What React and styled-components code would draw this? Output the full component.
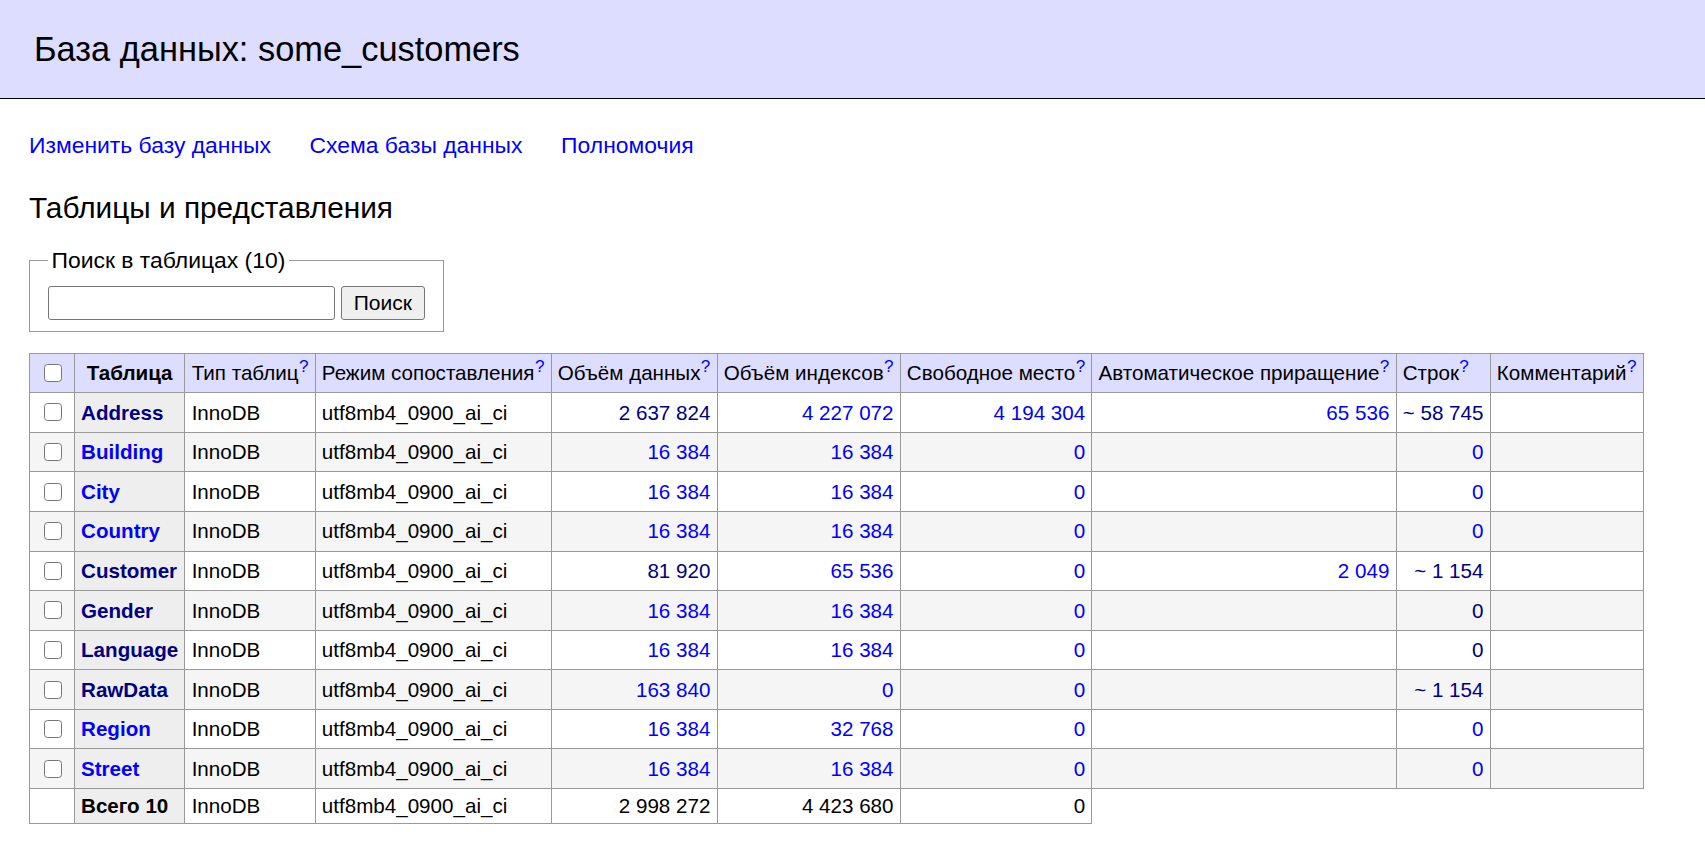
import React from 'react';
import styled, { createGlobalStyle } from 'styled-components';

const GlobalStyle = createGlobalStyle`
    body {
        margin: 0;
        background: #fff;
        color: #000;
        font: 22.9px/1.25 "Liberation Sans", Arial, sans-serif;
    }
`

const Header = styled.h2`
    margin: 0 0 31.8px;
    padding: 27.5px 34px;
    font-size: 34.4px;
    line-height: 1.25;
    font-weight: normal;
    background: #ddf;
    border-bottom: 1px solid #000;
`

const Content = styled.div`
    padding: 0 20px 30px 29px;
`

const Links = styled.p`
    display: flex;
    gap: 38.6px;
    margin: 0;
`

const Link = styled.a`
    color: ${props => props.$visited ? 'navy' : '#00f'};
    text-decoration: none;
    white-space: nowrap;
`

const Title = styled.h3`
    margin: 29.8px 0 0;
    font-size: 29.8px;
    line-height: 1.25;
    font-weight: normal;
`

const Fieldset = styled.fieldset`
    display: inline-flex;
    gap: 6.3px;
    margin: 19.3px 0 0;
    padding: 11.45px 18.3px;
    border: 1px solid #999;
    min-inline-size: 0;
`

const Legend = styled.legend`
    padding: 0 3.2px;
`

const SearchInput = styled.input`
    box-sizing: border-box;
    width: 286.4px;
    height: 33.7px;
    border: 1px solid #767676;
    border-radius: 3px;
    font: 21px "Liberation Sans", Arial, sans-serif;
`

const SearchButton = styled.button`
    box-sizing: border-box;
    width: 83.7px;
    height: 33.7px;
    padding: 0;
    background: #efefef;
    border: 1px solid #767676;
    border-radius: 3px;
    color: #000;
    font: 21px "Liberation Sans", Arial, sans-serif;
`

const Table = styled.table`
    margin-top: 20.6px;
    border-collapse: collapse;
    font-size: 20.6px;
    line-height: 1.25;
`

const Row = styled.tr`
    background: ${props => props.$head ? '#ddf' : props.$odd ? '#f5f5f5' : '#fff'};
`

const Cell = styled.td`
    padding: 4.12px 6.18px;
    border: 1px solid #999;
    white-space: nowrap;
    vertical-align: middle;
    text-align: ${props => props.$num ? 'right' : 'left'};
`

const NameCell = styled.th`
    padding: 4.12px 6.18px;
    border: 1px solid #999;
    white-space: nowrap;
    vertical-align: middle;
    text-align: ${props => props.$head ? 'center' : 'left'};
    background: ${props => props.$head ? '#ddf' : '#eee'};
    font-weight: bold;
`

const Check = styled.input`
    display: block;
    appearance: none;
    box-sizing: border-box;
    width: 18px;
    height: 18px;
    margin: 6.2px 6px 6.2px 7.5px;
    border: 1.6px solid #767676;
    border-radius: 3.5px;
    background: #fff;
`

const Help = styled.sup`
    margin-left: 0.4px;
    font-size: 0.833em;
    line-height: 0;
`

const tables = [
    {name: 'Address', v: true, data: '2 637 824', dv: true, idx: '4 227 072', free: '4 194 304', auto: '65 536', rows: '~ 58 745', rv: true},
    {name: 'Building', data: '16 384', idx: '16 384', free: '0', rows: '0'},
    {name: 'City', data: '16 384', idx: '16 384', free: '0', rows: '0'},
    {name: 'Country', data: '16 384', idx: '16 384', free: '0', rows: '0'},
    {name: 'Customer', v: true, data: '81 920', dv: true, idx: '65 536', free: '0', auto: '2 049', rows: '~ 1 154', rv: true},
    {name: 'Gender', v: true, data: '16 384', idx: '16 384', free: '0', rows: '0', rv: true},
    {name: 'Language', v: true, data: '16 384', idx: '16 384', free: '0', rows: '0', rv: true},
    {name: 'RawData', v: true, data: '163 840', idx: '0', free: '0', rows: '~ 1 154', rv: true},
    {name: 'Region', data: '16 384', idx: '32 768', free: '0', rows: '0'},
    {name: 'Street', data: '16 384', idx: '16 384', free: '0', rows: '0'},
]

const columns = ['Тип таблиц', 'Режим сопоставления', 'Объём данных', 'Объём индексов', 'Свободное место', 'Автоматическое приращение', 'Строк', 'Комментарий']

const App = () => {
    return (
        <>
            <GlobalStyle />
            <Header>База данных: some_customers</Header>
            <Content>
                <Links>
                    <Link href="#">Изменить базу данных</Link>
                    <Link href="#">Схема базы данных</Link>
                    <Link href="#">Полномочия</Link>
                </Links>
                <Title>Таблицы и представления</Title>
                <form>
                    <Fieldset>
                        <Legend>Поиск в таблицах (10)</Legend>
                        <SearchInput type="search" />
                        <SearchButton type="button">Поиск</SearchButton>
                    </Fieldset>
                </form>
                <Table>
                    <thead>
                        <Row $head>
                            <Cell><Check type="checkbox" /></Cell>
                            <NameCell $head>Таблица</NameCell>
                            {columns.map(c => (
                                <Cell key={c}>{c}<Help><Link href="#">?</Link></Help></Cell>
                            ))}
                        </Row>
                    </thead>
                    <tbody>
                        {tables.map((t, i) => (
                            <Row key={t.name} $odd={i % 2 === 1}>
                                <Cell><Check type="checkbox" /></Cell>
                                <NameCell><Link href="#" $visited={t.v}>{t.name}</Link></NameCell>
                                <Cell>InnoDB</Cell>
                                <Cell>utf8mb4_0900_ai_ci</Cell>
                                <Cell $num><Link href="#" $visited={t.dv}>{t.data}</Link></Cell>
                                <Cell $num><Link href="#">{t.idx}</Link></Cell>
                                <Cell $num><Link href="#">{t.free}</Link></Cell>
                                <Cell $num>{t.auto && <Link href="#">{t.auto}</Link>}</Cell>
                                <Cell $num><Link href="#" $visited={t.rv}>{t.rows}</Link></Cell>
                                <Cell></Cell>
                            </Row>
                        ))}
                        <Row>
                            <Cell></Cell>
                            <NameCell>Всего 10</NameCell>
                            <Cell>InnoDB</Cell>
                            <Cell>utf8mb4_0900_ai_ci</Cell>
                            <Cell $num>2 998 272</Cell>
                            <Cell $num>4 423 680</Cell>
                            <Cell $num>0</Cell>
                        </Row>
                    </tbody>
                </Table>
            </Content>
        </>
    )
}

export default App;
